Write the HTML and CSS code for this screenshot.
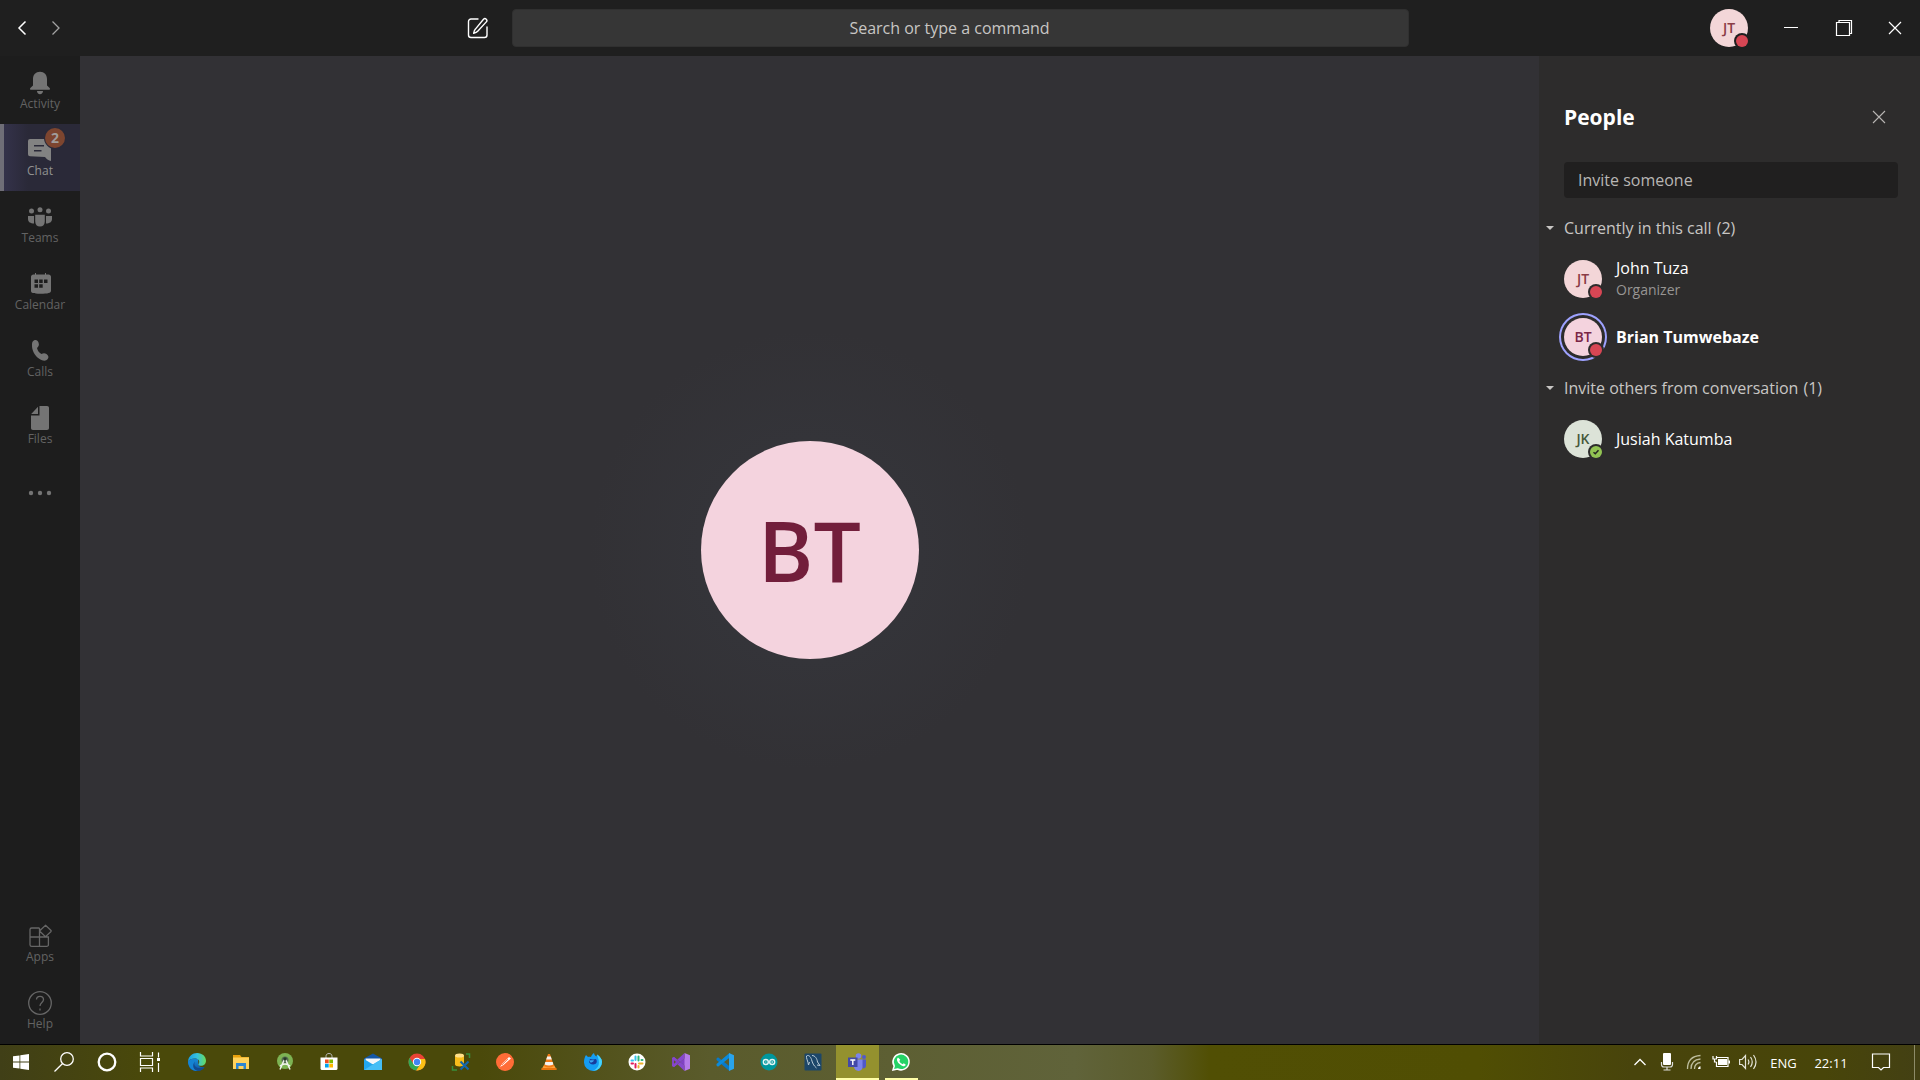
FILE: index.html
```html
<!DOCTYPE html>
<html lang="en">
<head>
<meta charset="utf-8">
<title>Call with Brian Tumwebaze</title>
<link rel="stylesheet" href="styles.css">
</head>
<body>
<div class="desktop">
  <header class="titlebar">
    <div class="titlebar-start">
      <button class="nav-btn" aria-label="Back"><svg width="10" height="16" viewBox="0 0 10 16"><path d="M8.500 1.500L2 8l6.500 6.500" fill="none" stroke="#fff" stroke-width="1.500"/></svg></button>
      <button class="nav-btn" aria-label="Forward"><svg width="10" height="16" viewBox="0 0 10 16"><path d="M1.500 1.500L8 8l-6.500 6.500" fill="none" stroke="#a3a3a3" stroke-width="1.300"/></svg></button>
      <button class="compose-btn" aria-label="New chat"><svg width="22" height="22" viewBox="0 0 22 22" fill="none" stroke="#fff" stroke-width="1.400" stroke-linecap="round" stroke-linejoin="round"><path d="M11 2H4a2.500 2.500 0 0 0-2.500 2.500V18A2.500 2.500 0 0 0 4 20.500h13.500A2.500 2.500 0 0 0 20 18v-8"/><path d="M16.500 2.200a1.900 1.900 0 0 1 2.800 2.700l-8.600 9.400c-.8.900-2.600 1.700-4 2 .2-1.500.8-3.300 1.700-4.200z"/></svg></button>
    </div>
    <input class="command-box" type="text" aria-label="Search or type a command" placeholder="Search or type a command">
    <div class="titlebar-end">
      <button class="avatar avatar-rose on-bar" aria-label="Profile">JT<span class="presence busy"></span></button>
      <div class="window-controls">
        <button aria-label="Minimize"><svg width="18" height="18" viewBox="0 0 18 18"><path d="M2 8.500h14" stroke="#fff" fill="none"/></svg></button>
        <button aria-label="Restore"><svg width="18" height="18" viewBox="0 0 18 18" fill="none" stroke="#fff" stroke-width="1.200"><path d="M1.500 3.500h13v13h-13zM4 3.500v-2h12.500v13h-2"/></svg></button>
        <button aria-label="Close"><svg width="14" height="14" viewBox="0 0 14 14"><path d="M1 1l12 12M13 1L1 13" stroke="#fff" stroke-width="1.200"/></svg></button>
      </div>
    </div>
  </header>

  <div class="workspace">
    <nav class="rail">
      <a class="rail-item" href="#activity"><svg width="24" height="24" viewBox="0 0 24 24"><path d="M12 .800C7.800.800 5 3.700 5 8v6.500L2.300 17c-.6.900-.2 1.800.7 1.800h18c.9 0 1.300-.9.700-1.800L19 14.500V8C19 3.700 16.200.800 12 .800zM9 20h6c0 2-1.300 3.200-3 3.200S9 22 9 20z"/></svg><span>Activity</span></a>
      <a class="rail-item active" href="#chat"><svg width="24" height="24" viewBox="0 0 24 24"><path fill-rule="evenodd" d="M2 1h19a2 2 0 0 1 2 2v20c-2-.3-4.500-1.700-6-4L2 18.300A2 2 0 0 1 0 16.300V3a2 2 0 0 1 2-2zM6 7v1.400h10V7zM6 12v1.400h7.500V12z"/></svg><span>Chat</span><span class="badge">2</span></a>
      <a class="rail-item" href="#teams"><svg width="24" height="24" viewBox="0 0 24 24"><circle cx="3.500" cy="6" r="2.500"/><circle cx="12" cy="4.800" r="2.500"/><circle cx="20.500" cy="6" r="2.500"/><path d="M0 11h6v7.500C2.500 18.500 0 17 0 14zM18 11h6v3c0 3-2.500 4.500-6 4.500zM7.200 9.800h9.600v6.500c0 3.500-1.800 5.200-4.800 5.200s-4.800-1.700-4.800-5.200z"/></svg><span>Teams</span></a>
      <a class="rail-item" href="#calendar"><svg width="24" height="24" viewBox="0 0 24 24"><path fill-rule="evenodd" d="M7 1h1v1.500h9V1h1v1.500h2.500c1.500 0 2.500 1 2.500 2.300v14c0 2.200-3 3-10.500 3s-9.500-.8-9.500-3v-14C3 3.500 4 2.500 5.500 2.500H7zM6.500 7.500V11H10V7.500zm4.700 0V11h3.500V7.500zm4.800 0V11h3.500V7.500zM6.500 12.300v3.500H10v-3.500zm4.700 0v3.500h3.500v-3.500z"/></svg><span>Calendar</span></a>
      <a class="rail-item" href="#calls"><svg width="24" height="24" viewBox="0 0 24 24"><path d="M5.800 1.400c2.400-1.200 3.900-.1 4.800 2.300.9 2.500-.2 3.800-1.600 5.200.6 2.700 2.400 5 4.500 6.200 1.500-1 3.200-1.300 5 0 2 1.500 2.600 3.200 1.200 5-1.700 2.300-4.700 2.300-8.100 0C6.600 16.700 3.700 11.500 4 5.500c0-2 .5-3.400 1.800-4.100z"/></svg><span>Calls</span></a>
      <a class="rail-item" href="#files"><svg width="24" height="24" viewBox="0 0 24 24"><path d="M11.500 0H19c1.300 0 2 .7 2 2v20c0 1.300-.7 2-2 2H5c-1.300 0-2-.7-2-2V9.500h8.500zM10 .800V8H3.200z"/></svg><span>Files</span></a>
      <button class="rail-item more" aria-label="More apps"><svg width="24" height="24" viewBox="0 0 24 24"><circle cx="3" cy="12" r="2.200"/><circle cx="12" cy="12" r="2.200"/><circle cx="21" cy="12" r="2.200"/></svg></button>
      <a class="rail-item outline rail-bottom" href="#apps"><svg width="24" height="24" viewBox="0 0 24 24"><path d="M11.500 4H3.700A1.700 1.700 0 0 0 2 5.700v15A1.700 1.700 0 0 0 3.700 22.400h15a1.700 1.700 0 0 0 1.700-1.700V13H2M11.500 4v18.400M17.500 1.300l5.300 5a1 1 0 0 1 0 1.400l-5.300 5-5.200-5a1 1 0 0 1 0-1.400z"/></svg><span>Apps</span></a>
      <a class="rail-item outline" href="#help"><svg width="24" height="24" viewBox="0 0 24 24"><circle cx="12" cy="12" r="11.300"/><path d="M8.500 8.500c0-2 1.400-3.200 3.500-3.200s3.500 1.200 3.500 3.200c0 3-3.500 3-3.500 6.500M12 17.500v2"/></svg><span>Help</span></a>
    </nav>

    <main class="stage">
      <div class="speaker">BT</div>
    </main>

    <aside class="people">
      <div class="people-head">
        <h2>People</h2>
        <button aria-label="Close people pane"><svg width="14" height="14" viewBox="0 0 14 14"><path d="M1 1l12 12M13 1L1 13" stroke="#b8b6b4" stroke-width="1.100"/></svg></button>
      </div>
      <input class="invite" type="text" aria-label="Invite someone" placeholder="Invite someone">
      <section>
        <button class="group-head" aria-expanded="true"><span class="caret"></span>Currently in this call <span class="count">(2)</span></button>
        <ul>
          <li><span class="avatar avatar-rose">JT<span class="presence busy"></span></span><div><p class="name">John Tuza</p><p class="role">Organizer</p></div></li>
          <li class="speaking"><span class="avatar avatar-pink">BT<span class="presence busy"></span></span><p class="name">Brian Tumwebaze</p></li>
        </ul>
      </section>
      <section>
        <button class="group-head" aria-expanded="true"><span class="caret"></span>Invite others from conversation <span class="count">(1)</span></button>
        <ul>
          <li><span class="avatar avatar-green">JK<span class="presence available"><svg width="12" height="12" viewBox="0 0 12 12"><path d="M3.500 6.200l1.800 1.600 3.200-3.500" fill="none" stroke="#252423" stroke-width="1.500"/></svg></span></span><p class="name">Jusiah Katumba</p></li>
        </ul>
      </section>
    </aside>
  </div>

  <footer class="taskbar">
    <div class="shell-buttons">
      <button aria-label="Start"><svg width="20" height="20" viewBox="0 0 20 20" fill="#fff"><path d="M2 4.300l6.500-.9v6.200H2zM9.300 3.200L18 2v7.600H9.300zM2 10.400h6.500v6.200L2 15.700zM9.300 10.400H18V18l-8.700-1.200z"/></svg></button>
      <button aria-label="Search"><svg width="20" height="20" viewBox="0 0 20 20" fill="none" stroke="#fff" stroke-width="1.300"><circle cx="13" cy="7" r="6.300"/><path d="M8.600 11.500L.5 19.500"/></svg></button>
      <button aria-label="Cortana"><svg width="20" height="20" viewBox="0 0 20 20" fill="none" stroke="#fff" stroke-width="2.300"><circle cx="10" cy="10" r="8.300"/></svg></button>
      <button aria-label="Task view"><svg width="22" height="20" viewBox="0 0 22 20" fill="none" stroke="#fff" stroke-width="1.200"><path d="M1.500 0v4h12V0M1.500 20v-4h12v4M1.500 6.500h12v7h-12zM19.500.500v5M19.500 11v9"/><path fill="#fff" stroke="none" d="M18 6h3v3h-3z"/></svg></button>
    </div>
    <div class="apps">
      <button aria-label="Edge"><svg width="20" height="20" viewBox="0 0 20 20"><defs><linearGradient id="edge-top"><stop offset="0" stop-color="#1b9de2"/><stop offset=".5" stop-color="#35c1df"/><stop offset="1" stop-color="#67dc5c"/></linearGradient><linearGradient id="edge-low" x2="0" y2="1"><stop offset="0" stop-color="#1a8fdb"/><stop offset="1" stop-color="#0c4fa0"/></linearGradient></defs><path d="M1 9.500C2 12 1 19 10 19c3 0 6-1.500 7.500-4-3 1-6-.5-6-2.500L11 7z" fill="url(#edge-low)"/><path d="M1 9.500C1.500 4 5.500 1 10.200 1 15.500 1 19 4.700 19 8.700c0 3-2.200 5-5 5-2 0-3-.7-2.500-1.500 1.700-2.200.5-5.400-3-5.600C5 6.500 2.500 7.500 1 9.500z" fill="url(#edge-top)"/><path d="M1 9.500C2.500 7.500 5 6.500 8.500 6.600c1 .2 1.500.6 2 1-3 .9-4.500 4-3 7 .8 2 2.500 3.800 4.500 4.200C6 20 1 15.500 1 9.500z" fill="#1583d2"/><path d="M8 9.500C5.500 14 10 18 17.500 15c-1.600 2.500-4 4-6.500 4C6.500 18.500 4.500 13 8 9.500z" fill="#124a8f"/></svg></button>
      <button aria-label="File Explorer"><svg width="20" height="20" viewBox="0 0 20 20"><path d="M2 3h7l1.500 2H18v12H2z" fill="#e8a10c"/><path d="M2 5.500h16V17H2z" fill="#ffd35c"/><path d="M5 17v-6h10v6h-2.500v-3h-5v3z" fill="#2d86d0"/></svg></button>
      <button aria-label="Android Studio"><svg width="20" height="20" viewBox="0 0 20 20"><circle cx="10" cy="9" r="8" fill="#7db353"/><circle cx="10" cy="8" r="3.500" fill="#546b50"/><path d="M9.500 7L5 17.500M10.500 7L15 17.500M5 14q5-4 10 0" fill="none" stroke="#f0f3ed" stroke-width="1.500"/><circle cx="10" cy="7" r="1.800" fill="#273b28"/></svg></button>
      <button aria-label="Store"><svg width="20" height="20" viewBox="0 0 20 20"><path d="M7 6V4.500C7 2.500 8 1.500 10 1.500s3 1 3 3V6" fill="none" stroke="#bbb"/><path d="M1.500 5.500h17v11q0 1.500-1.500 1.500H3q-1.500 0-1.500-1.500z" fill="#fff"/><path fill="#f25022" d="M6 7.500h3.700v3.700H6z"/><path fill="#7fba00" d="M10.300 7.500H14v3.700h-3.700z"/><path fill="#00a4ef" d="M6 11.800h3.700v3.700H6z"/><path fill="#ffb900" d="M10.300 11.800H14v3.700h-3.700z"/></svg></button>
      <button aria-label="Mail"><svg width="20" height="20" viewBox="0 0 20 20"><path d="M1 6.500L10 1.500l9 5V10H1z" fill="#1557a5"/><path d="M2.500 6.500h15v6h-15z" fill="#f3f7fa"/><path d="M1 7l9 5.500L19 7v11H1z" fill="#22a7ee"/><path d="M1 18L13 10.500 19 7v11z" fill="#45bef6"/></svg></button>
      <button aria-label="Chrome"><svg width="20" height="20" viewBox="0 0 20 20"><circle cx="10" cy="10" r="8.500" fill="#ea4335"/><path d="M2.600 5.800A8.500 8.500 0 0 0 9.200 18.500L13.500 12 10 10 6.500 12z" fill="#34a853"/><path d="M18 7A8.500 8.500 0 0 1 9.200 18.500L13.500 12 12 7z" fill="#fbc116"/><circle cx="10" cy="10" r="4.200" fill="#fff"/><circle cx="10" cy="10" r="3.200" fill="#4285f4"/></svg></button>
      <button aria-label="SQL tools"><svg width="20" height="20" viewBox="0 0 20 20"><path d="M4 3.500v9c0 2.500 9 2.500 9 0v-9z" fill="#f7bd1b"/><ellipse cx="8.500" cy="3.500" rx="4.500" ry="2" fill="#ffe18a"/><path d="M15 2h3.500v4M1.500 14v4H6" fill="none" stroke="#388f3d" stroke-width="1.500"/><path d="M9.500 9.500l8 8M17.500 9.500l-8 8" stroke="#1467ae" stroke-width="2.200"/></svg></button>
      <button aria-label="Postman"><svg width="20" height="20" viewBox="0 0 20 20"><circle cx="10" cy="10" r="9" fill="#ff6c37"/><path d="M14 5l2 1.500L8.500 13 5 15l2.500-3.500z" fill="#fff"/><path d="M13 7L7 13" stroke="#ff6c37" stroke-width=".8"/></svg></button>
      <button aria-label="VLC"><svg width="20" height="20" viewBox="0 0 20 20"><path d="M5 13h10l2.500 4.500h-15z" fill="#ffa23b"/><path d="M9 2h2l4 12q-5 3-10 0z" fill="#f47b16"/><path d="M8.200 4.500h3.600l1 3H7.200zM6.300 10h7.400l.7 2.500q-4.400 1.800-8.800 0z" fill="#f5f3ef"/><path d="M2.500 16h15v2h-15z" fill="#e8730c"/></svg></button>
      <button aria-label="Firefox"><svg width="20" height="20" viewBox="0 0 20 20"><path d="M3 3l2 2c1-.4 2-.4 3 0 .5-2 1.500-3 3-4 .2 1.500 1 2.500 2.500 3.500L14 2.500c3 2 5 4.500 5 7.500a9 8.700 0 0 1-18 .5C1 7.500 1.700 5 3 3z" fill="#159df3"/><path d="M14 2.500c3 2 5 4.500 5 7.500a9 8.700 0 0 1-9 8.700c7-2.700 7-8.700 4-16.200z" fill="#45d3fc"/><path d="M7 7l3 .5 3-.5c1.800 2.500.5 5.500-2.800 5.500-2.700 0-4.200-1.500-4.200-3z" fill="#173b9c"/><path d="M6 8.500c2 0 4-.5 5 0-1 1.500-2 2-3.500 2z" fill="#3aa6f2"/></svg></button>
      <button aria-label="Slack"><svg width="20" height="20" viewBox="0 0 20 20" fill="none" stroke-width="2" stroke-linecap="round"><circle cx="10" cy="10" r="8.500" fill="#fff"/><path d="M8.500 4.500v3.500M4.500 8.500H6" stroke="#36c5f0"/><path d="M11.500 4.500v4M14.500 8h1" stroke="#2eb67d"/><path d="M12 11.500h3.500M11.500 14v1.500" stroke="#ecb22e"/><path d="M8.500 12v3.500M4.500 11.500H6" stroke="#e01e5a"/></svg></button>
      <button aria-label="Visual Studio"><svg width="20" height="20" viewBox="0 0 20 20"><path d="M1 6l2-1 11 9V6L3 15l-2-1z" fill="#8042c5"/><path d="M13.500 1L19 3.300v13.400L13.500 19z" fill="#b57be9"/><path d="M1 6l2-1 10.500 8.500V19L1.500 7.500zM1 14l2 1 10.500-8.500V1L1 12.500z" fill="#8647cc"/><path d="M3 8.200v3.600L5 10z" fill="#5a5c2a"/></svg></button>
      <button aria-label="Visual Studio Code"><svg width="20" height="20" viewBox="0 0 20 20"><path d="M1.500 6.500L3 5.300l11.500 9V19L1.500 8z" fill="#0879c9"/><path d="M1.500 13.500L3 14.700l11.500-9V1L1.500 12z" fill="#0b8bdc"/><path d="M14 1l5 2.300v13.400L14 19z" fill="#29a4ec"/></svg></button>
      <button aria-label="Arduino"><svg width="20" height="20" viewBox="0 0 20 20" fill="none" stroke="#e4f5f5" stroke-width="1.400"><circle cx="10" cy="10" r="8.500" fill="#00979d" stroke="none"/><circle cx="6.800" cy="10" r="2.500"/><circle cx="13.200" cy="10" r="2.500"/><path d="M6 10h1.600M12.400 10H14M13.200 9.200v1.600" stroke-width=".7"/></svg></button>
      <button aria-label="MySQL Workbench"><svg width="20" height="20" viewBox="0 0 20 20"><rect x="1.500" y="1.500" width="17" height="17" rx="1" fill="#1c4669"/><path d="M5.500 13C5 9 3 6 3.500 4c2-1.500 4 .5 5 3.500 1 3.500 2 6 5 8.500M9 3.500c3 0 5 3 5.500 6.500l2.500 3.500-3-.5M6.500 10l-1 3" fill="none" stroke="#b9cbd7"/></svg></button>
      <button class="current" aria-label="Teams"><svg width="20" height="20" viewBox="0 0 20 20"><circle cx="11.500" cy="4" r="2.800" fill="#7b83eb"/><circle cx="17" cy="5" r="2" fill="#5059c9"/><path d="M14 7.500h5v6q0 3-3.500 3z" fill="#5059c9"/><path d="M7 7.500h8.500v7q0 4-4 4.500-4-.5-4.500-4z" fill="#7b83eb"/><path d="M1 5.500h9.500v9.500H1z" fill="#4349a8"/><path d="M3.300 8h5M5.800 8v5" stroke="#fff" stroke-width="1.400"/></svg></button>
      <button class="running" aria-label="WhatsApp"><svg width="20" height="20" viewBox="0 0 20 20"><path d="M2 18l1.200-4A8 8 0 1 1 6.500 17z" fill="#25d366" stroke="#fff" stroke-width="1.500"/><path d="M7 5.500c-2 1.800-.7 4.500 1.500 6.600 2.300 2.200 5 3 6.300.6l-2-1.500-1.300 1C10 11.500 9 10.500 8.300 9l1-1.200z" fill="#fff"/></svg></button>
    </div>
    <div class="tray">
      <button aria-label="Show hidden icons"><svg width="14" height="20" viewBox="0 0 14 20"><path d="M1.500 13L7 7.500l5.500 5.500" fill="none" stroke="#fff" stroke-width="1.300"/></svg></button>
      <button aria-label="Microphone"><svg width="14" height="20" viewBox="0 0 14 20"><rect x="3" y="1" width="8" height="12" rx="1" fill="#fff"/><path d="M1.500 10v2.500q0 2.500 2.500 2.500h6q2.500 0 2.500-2.500V10M7 15v3M3.500 18h7" fill="none" stroke="#ddd" stroke-width="1.200"/></svg></button>
      <button aria-label="Network"><svg width="16" height="20" viewBox="0 0 16 20" fill="none" stroke="#bdbd9d" stroke-width="1.300"><path d="M1.500 17C1.500 9 6 4 14.500 3.500M5 17c0-6 3.500-9.500 9.500-10M8.500 17c0-3.500 2-6 6-6.500"/><path d="M12 17c0-1.500 1-2.500 2.500-2.800V17z" fill="#fff" stroke="none"/></svg></button>
      <button aria-label="Battery"><svg width="18" height="20" viewBox="0 0 18 20"><path d="M5 5.500h11v9H4.500V10M1 4v3h3.500V4M2.500 7v3h2" fill="none" stroke="#fff" stroke-width="1.200"/><path d="M6 7h9v6H6zM16.500 8.500H18v3h-1.500z" fill="#fff"/></svg></button>
      <button aria-label="Volume"><svg width="18" height="20" viewBox="0 0 18 20" fill="none" stroke="#e4e4d8" stroke-width="1.200"><path d="M.6 7.500H3l3.500-4v13L3 12.500H.600zM9 7.500q1.800 2.500 0 5M11.500 5q3.500 5 0 10M14.500 3q5 7 0 14"/></svg></button>
      <button class="lang">ENG</button>
      <button class="clock">22:11</button>
      <button class="notify" aria-label="Notifications"><svg width="20" height="20" viewBox="0 0 20 20"><path d="M1.500 2h17v13.500h-6L10 18l-2.500-2.500h-6z" fill="none" stroke="#fff" stroke-width="1.200"/></svg></button>
      <button class="show-desktop" aria-label="Show desktop"></button>
    </div>
  </footer>
</div>
</body>
</html>
```
FILE: styles.css
```css
* { box-sizing: border-box; }

body {
  margin: 0;
  background: #1f1f1f;
  color: #fff;
  font: 16px/24px "Open Sans", "Noto Sans", sans-serif;
}

button {
  margin: 0;
  padding: 0;
  border: 0;
  background: none;
  color: inherit;
  font: inherit;
}

input { font: inherit; border: 0; outline: 0; }
svg { display: block; }
p, h2, ul { margin: 0; padding: 0; }
ul { list-style: none; }

.desktop {
  display: flex;
  flex-direction: column;
  height: 100vh;
}

/* Title bar */
.titlebar {
  display: flex;
  align-items: center;
  height: 56px;
  flex: none;
  background: #1f1f1f;
}
.titlebar-start {
  display: flex;
  align-items: center;
  width: 512px;
  padding: 0 23px 0 5px;
}
.nav-btn {
  display: grid;
  place-items: center;
  width: 34px;
  height: 34px;
}
.compose-btn { margin-left: auto; }
.command-box {
  flex: 1;
  min-width: 0;
  height: 38px;
  padding: 0 22px 0 0;
  border: 1px solid #303030;
  border-radius: 4px;
  background: #363636;
  text-align: center;
}
.command-box::placeholder { color: #c8c6c4; opacity: 1; }
.titlebar-end {
  display: flex;
  align-items: center;
  justify-content: flex-end;
  gap: 16px;
  width: 511px;
}
.window-controls { display: flex; }
.window-controls button {
  display: grid;
  place-items: center;
  width: 53px;
  height: 56px;
}
.window-controls button:last-child { width: 50px; }

/* Avatars */
.avatar {
  position: relative;
  display: grid;
  place-items: center;
  flex: none;
  width: 38px;
  height: 38px;
  border-radius: 50%;
  font-size: 14px;
  font-weight: 600;
  --surface: #2d2c2c;
}
.on-bar { --surface: #1f1f1f; }
.avatar-rose { background: #f3d6d8; color: #8a3c46; }
.avatar-pink { background: #f4d3de; color: #7a2546; }
.avatar-green { background: #dce3d8; color: #46583b; }
.presence {
  position: absolute;
  right: 0;
  bottom: 0;
  width: 12px;
  height: 12px;
  border-radius: 50%;
  box-shadow: 0 0 0 2px var(--surface);
}
.busy { background: #d74654; }
.available { background: #92c353; }

.workspace {
  display: flex;
  flex: 1;
  min-height: 0;
}

/* App rail */
.rail {
  display: flex;
  flex-direction: column;
  flex: none;
  width: 80px;
  padding-top: 1px;
  background: #1d1d1d;
}
.rail-item {
  position: relative;
  display: flex;
  flex-direction: column;
  align-items: center;
  gap: 1px;
  height: 67px;
  padding-top: 14px;
  color: #636363;
  font-size: 12px;
  line-height: 16px;
  text-decoration: none;
}
.rail-item svg { fill: #747474; }
.rail-item.active {
  color: #919191;
  border-left: 4px solid #6f6e77;
  padding-right: 4px;
  background: linear-gradient(90deg, #34324a, #2a2938 24px);
}
.rail-item.active svg { fill: #828282; }
.rail-item.more { justify-content: center; padding-top: 0; }
.rail-item.outline svg { fill: none; stroke: #666; stroke-width: 1.3; }
.rail-bottom { margin-top: auto; }
.badge {
  position: absolute;
  top: 4px;
  left: 41px;
  width: 20px;
  height: 20px;
  border-radius: 50%;
  background: #7d452f;
  box-shadow: 0 0 0 1px #2a2938;
  color: #a19d9b;
  font-size: 14px;
  font-weight: 700;
  line-height: 20px;
  text-align: center;
}

/* Call stage */
.stage {
  display: grid;
  place-items: center;
  flex: 1;
  background: radial-gradient(circle, #343439 110px, #323135 220px);
}
.speaker {
  display: grid;
  place-items: center;
  width: 218px;
  height: 218px;
  border-radius: 50%;
  background: #f4d3de;
  color: #721e3b;
  font-size: 84px;
  font-weight: 600;
}

/* People pane */
.people {
  flex: none;
  width: 381px;
  padding: 41px 22px 0 7px;
  background: #2d2c2c;
}
.people-head {
  display: flex;
  align-items: center;
  justify-content: space-between;
  height: 40px;
  padding: 0 12px 0 18px;
}
h2 { font-size: 21px; font-weight: 700; line-height: 40px; }
.invite {
  display: block;
  width: calc(100% - 18px);
  height: 36px;
  margin: 25px 0 18px 18px;
  padding: 0 14px;
  border-radius: 4px;
  background: #201f1f;
}
.invite::placeholder { color: #b8b6b4; opacity: 1; }
.people section { margin-bottom: 10px; }
.group-head {
  display: flex;
  align-items: center;
  margin-bottom: 10px;
  color: #c8c6c4;
}
.count { margin-left: 5px; }
.caret {
  margin-right: 10px;
  border: solid transparent;
  border-width: 4px 4px 0;
  border-top-color: #c8c6c4;
}
.people li {
  display: flex;
  align-items: center;
  gap: 14px;
  height: 58px;
  padding-left: 18px;
}
.name { line-height: 22px; }
.role { color: #979593; font-size: 14px; line-height: 22px; }
.speaking .name { font-weight: 700; }
.speaking .avatar { box-shadow: 0 0 0 3px #2d2c2c, 0 0 0 5px #9ea2ff; }

/* Taskbar */
.taskbar {
  display: flex;
  flex: none;
  height: 36px;
  border-top: 1px solid #000;
  background: linear-gradient(90deg, #403f17, #4a490a 8%, #4a490a 25%, #5a5b2c 37%, #60633a 56%, #5b5c2b 60%, #514f04 63%, #504e03 77%, #48440c 85%, #484509 95%, #434014);
}
.shell-buttons, .apps, .tray { display: flex; }
.taskbar button {
  display: grid;
  place-items: center;
  padding: 0 2px 2px 0;
}
.shell-buttons button, .apps button { width: 43px; }
.apps { gap: 1px; margin-left: 4px; }
.apps .current {
  background: #94912e;
  box-shadow: inset 0 -2px #ffffa8;
}
.apps .running {
  background: linear-gradient(#ffffa8, #ffffa8) center bottom / 33px 2px no-repeat;
}
.tray { margin-left: auto; font-size: 13px; }
.tray button { width: 27px; }
.tray .lang { width: 43px; padding: 0; }
.tray .clock { width: 52px; padding: 0; }
.tray .notify { width: 47px; margin-right: 10px; padding-right: 0; }
.tray .show-desktop { width: 6px; border-left: 1px solid #8d8b68; }
```
